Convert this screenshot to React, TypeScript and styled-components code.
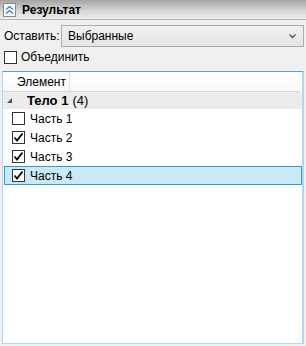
import styled, { createGlobalStyle } from 'styled-components';

interface Part {
  label: string;
  checked: boolean;
}

const parts: Part[] = [
  { label: 'Часть 1', checked: false },
  { label: 'Часть 2', checked: true },
  { label: 'Часть 3', checked: true },
  { label: 'Часть 4', checked: true },
];

const GlobalStyle = createGlobalStyle`
  html, body {
    margin: 0;
    padding: 0;
    background: #f0f0f0;
  }
  #root {
    height: 346px;
  }
`;

const Window = styled.div`
  display: flex;
  flex-direction: column;
  width: 306px;
  height: 346px;
  font-family: 'Liberation Sans', Arial, sans-serif;
  font-size: 12px;
  color: #000;
  background: #f0f0f0;
  box-sizing: border-box;
`;

const Header = styled.div`
  display: flex;
  align-items: center;
  gap: 6px;
  height: 19px;
  padding-left: 3px;
  background: linear-gradient(#a4a4a4, #d8d8d8 60%, #eeeeee);
  border-bottom: 1px solid #b4b4b4;
`;

const CollapseIcon = styled.div`
  display: flex;
  align-items: center;
  justify-content: center;
  width: 11px;
  height: 12px;
  background: #fff;
  border: 1px solid #8a8a8a;
`;

const Title = styled.span`
  font-weight: bold;
  font-size: 12px;
`;

const FieldRow = styled.div`
  display: flex;
  align-items: center;
  margin-top: 5px;
  padding: 0 2px 0 4px;
`;

const FieldLabel = styled.span`
  width: 57px;
`;

const Combo = styled.div`
  flex: 1;
  display: flex;
  align-items: center;
  justify-content: space-between;
  height: 20px;
  padding: 0 7px 0 6px;
  background: linear-gradient(#f0f0f0, #e6e6e6);
  border: 1px solid #acacac;
`;

const CheckRow = styled.label`
  display: flex;
  align-items: center;
  gap: 4px;
  margin-top: 3px;
  padding-left: 4px;
`;

const Box = styled.span`
  display: flex;
  align-items: center;
  justify-content: center;
  width: 11px;
  height: 11px;
  background: #fff;
  border: 1px solid #333;
`;

const Panel = styled.div`
  flex: 1;
  display: flex;
  flex-direction: column;
  margin: 7px 2px 2px;
  background: #fff;
  border: 1px solid #b3d6f0;
  border-top-color: #5f9fd2;
  border-right-width: 2px;
`;

const ColumnHeader = styled.div`
  display: flex;
  height: 19px;
  margin-right: 2px;
  background: linear-gradient(#ffffff, #f7f8f9);
  border-bottom: 1px solid #d5d5d5;
`;

const ColumnCell = styled.div`
  display: flex;
  align-items: center;
  width: 52px;
  padding-left: 14px;
  border-right: 1px solid #e3e3e3;
`;

const GroupRow = styled.div`
  display: flex;
  align-items: center;
  height: 17px;
  padding-left: 4px;
  background: #ececec;
  font-size: 13px;
`;

const Arrow = styled.span`
  display: flex;
  width: 20px;
`;

const GroupName = styled.span`
  font-weight: bold;
  margin-right: 4px;
`;

const ItemRow = styled.div<{ $selected?: boolean }>`
  display: flex;
  align-items: center;
  gap: 5px;
  height: 17px;
  margin: 0 0 0 1px;
  padding-left: 7px;
  border: 1px solid ${(p) => (p.$selected ? '#26a0da' : 'transparent')};
  background: ${(p) => (p.$selected ? '#cbe8f6' : 'transparent')};
  font-size: 12px;
`;

const Check = () => (
  <svg width="11" height="11" viewBox="0 0 11 11">
    <path d="M1.5 5.5 L4 8.5 L9.5 1.5" fill="none" stroke="#000" strokeWidth="1.8" />
  </svg>
);

export default function App() {
  return (
    <Window>
      <GlobalStyle />
      <Header>
        <CollapseIcon>
          <svg width="9" height="10" viewBox="0 0 9 10">
            <path d="M1 4.5 L4.5 1.5 L8 4.5 M1 8.5 L4.5 5.5 L8 8.5" fill="none" stroke="#2a7bd0" strokeWidth="1.3" />
          </svg>
        </CollapseIcon>
        <Title>Результат</Title>
      </Header>
      <FieldRow>
        <FieldLabel>Оставить:</FieldLabel>
        <Combo>
          <span>Выбранные</span>
          <svg width="7" height="5" viewBox="0 0 7 5">
            <path d="M0.5 0.5 L3.5 3.5 L6.5 0.5" fill="none" stroke="#555" strokeWidth="1.4" />
          </svg>
        </Combo>
      </FieldRow>
      <CheckRow>
        <Box />
        <span>Объединить</span>
      </CheckRow>
      <Panel>
        <ColumnHeader>
          <ColumnCell>Элемент</ColumnCell>
        </ColumnHeader>
        <GroupRow>
          <Arrow>
            <svg width="5" height="5" viewBox="0 0 5 5">
              <path d="M5 0 L5 5 L0 5 Z" fill="#555" />
            </svg>
          </Arrow>
          <GroupName>Тело 1</GroupName>
          <span>(4)</span>
        </GroupRow>
        {parts.map((part, i) => (
          <ItemRow key={part.label} $selected={i === parts.length - 1}>
            <Box>{part.checked && <Check />}</Box>
            <span>{part.label}</span>
          </ItemRow>
        ))}
      </Panel>
    </Window>
  );
}
